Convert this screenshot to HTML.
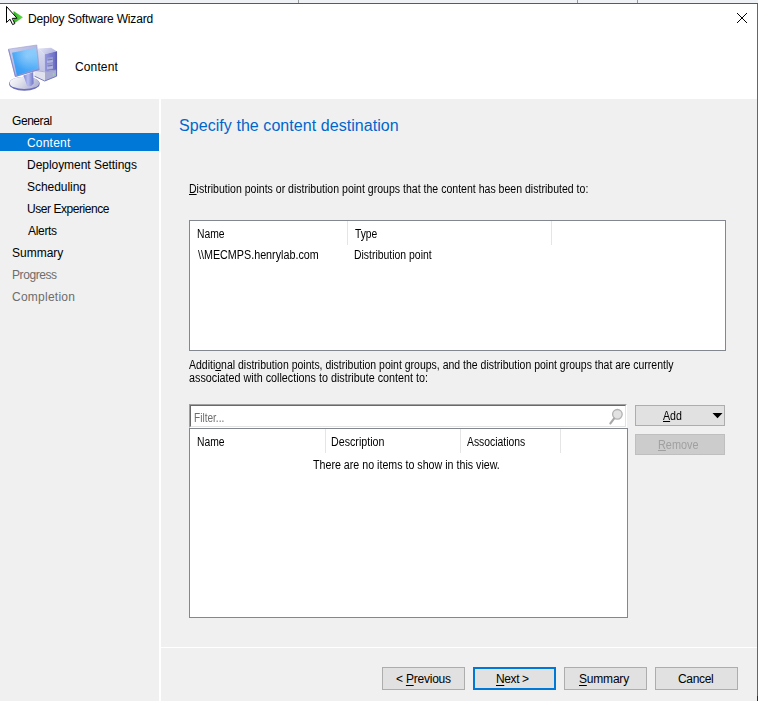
<!DOCTYPE html>
<html><head><meta charset="utf-8"><title>Deploy Software Wizard</title>
<style>
html,body{margin:0;padding:0;}
body{width:758px;height:701px;position:relative;overflow:hidden;background:#fff;font-family:"Liberation Sans",sans-serif;color:#000;}
.a{position:absolute;}
.t{position:absolute;white-space:nowrap;line-height:1;}
.box{position:absolute;background:#fff;border:1px solid #828790;box-sizing:border-box;}
.btn{position:absolute;box-sizing:border-box;border:1px solid #adadad;background:#e1e1e1;}
u{text-decoration:underline;text-underline-offset:1.5px;text-decoration-thickness:1px;}
.m u{text-underline-offset:0.5px;}
</style></head><body>
<div class="a" style="left:0;top:0;width:758px;height:3px;background:#eef1f5;"></div>
<div class="a" style="left:298px;top:0;width:1px;height:3px;background:#9a9a9a;"></div>
<div class="a" style="left:577px;top:0;width:1px;height:3px;background:#9a9a9a;"></div>
<div class="a" style="left:637px;top:0;width:1px;height:3px;background:#9a9a9a;"></div>
<div class="a" style="left:0;top:3px;width:758px;height:1px;background:#5a5a5a;"></div>
<div class="a" style="left:0;top:99px;width:757px;height:602px;background:#f0f0f0;"></div>
<div class="a" style="left:757px;top:4px;width:1px;height:697px;background:#666;"></div>
<div class="a" style="left:757px;top:696px;width:1px;height:5px;background:#0b3558;"></div>
<div class="a" style="left:159px;top:99px;width:2px;height:602px;background:#fff;"></div>
<div class="a" style="left:161px;top:647px;width:596px;height:1px;background:#fff;"></div>
<div class="a" style="left:0;top:133px;width:159px;height:18px;background:#0078d7;"></div>
<svg class="a" style="left:0;top:4px" width="30" height="26" viewBox="0 0 30 26">
<defs><linearGradient id="gg" x1="0" y1="0" x2="1" y2="0"><stop offset="0" stop-color="#2fae22"/><stop offset="1" stop-color="#66dc50"/></linearGradient></defs>
<path d="M13.5 7 L23 13.2 L14 19.5 Z" fill="url(#gg)"/>
<path d="M6.5 2.5 L6.5 18.5 L10 15.2 L12.6 20.6 L14.8 19.6 L12.3 14.4 L17 14.2 Z" fill="#fff" stroke="#000" stroke-width="1" stroke-linejoin="miter"/>
</svg>
<div class="t" style="left:28px;top:13px;font-size:12px;letter-spacing:-0.17px;">Deploy Software Wizard</div>
<svg class="a" style="left:735px;top:11px" width="14" height="14" viewBox="0 0 14 14"><path d="M2 2 L12 12 M12 2 L2 12" stroke="#000" stroke-width="1" fill="none"/></svg>
<svg class="a" style="left:0;top:36px" width="70" height="63" viewBox="0 36 70 63">
<defs>
<linearGradient id="scr" x1="0" y1="1" x2="1" y2="0"><stop offset="0" stop-color="#2f95f3"/><stop offset="0.55" stop-color="#55b0f8"/><stop offset="1" stop-color="#8fd2fc"/></linearGradient>
<linearGradient id="frm" x1="0" y1="0" x2="1" y2="1"><stop offset="0" stop-color="#cfd1ea"/><stop offset="0.5" stop-color="#b4b6e0"/><stop offset="1" stop-color="#8385cc"/></linearGradient>
<linearGradient id="twf" x1="0" y1="0" x2="0" y2="1"><stop offset="0" stop-color="#dcdef2"/><stop offset="1" stop-color="#c0c3e2"/></linearGradient>
<linearGradient id="twr" x1="0" y1="0" x2="1" y2="0"><stop offset="0" stop-color="#9698dc"/><stop offset="0.85" stop-color="#6c6ec6"/><stop offset="1" stop-color="#5052b0"/></linearGradient>
<linearGradient id="bas" x1="0" y1="0" x2="1" y2="0.4"><stop offset="0" stop-color="#ffffff"/><stop offset="0.45" stop-color="#e2e3ee"/><stop offset="1" stop-color="#b4b6d4"/></linearGradient>
<linearGradient id="nck" x1="0" y1="0" x2="1" y2="0"><stop offset="0" stop-color="#7d84d8"/><stop offset="0.45" stop-color="#b9bff0"/><stop offset="1" stop-color="#6f76c8"/></linearGradient>
<linearGradient id="twt" x1="0" y1="0" x2="1" y2="0.3"><stop offset="0" stop-color="#e6e7f6"/><stop offset="1" stop-color="#b6b8e2"/></linearGradient>
<radialGradient id="gl" cx="0.55" cy="0.3" r="0.5"><stop offset="0" stop-color="#fff" stop-opacity="0.28"/><stop offset="1" stop-color="#fff" stop-opacity="0"/></radialGradient>
<filter id="sb" x="-5%" y="-5%" width="110%" height="110%"><feGaussianBlur stdDeviation="0.35"/></filter>
</defs>
<g filter="url(#sb)">
<!-- tower -->
<path d="M38 48.4 L51.1 47.8 L56.7 51.2 L44.7 54.2 Z" fill="url(#twt)"/>
<path d="M38 48.4 L44.7 54.2 L44.7 71.6 L34.5 70.2 L34.5 60 Z" fill="url(#twf)"/>
<path d="M44.7 54.2 L56.7 51.2 L56.7 69.8 L44.7 71.6 Z" fill="url(#twr)"/>
<path d="M44.7 71.6 L56.7 69.8 L56.7 76.3 L44.7 81.2 Z" fill="#a9acd2"/>
<path d="M34.5 70.2 L44.7 71.6 L44.7 81.2 L34.5 76.4 Z" fill="#e0e2ee"/>
<path d="M34.5 70.4 L44.7 71.8 L56.7 70" stroke="#8a8cc6" stroke-width="0.6" fill="none"/>
<path d="M34.5 76.2 L44.7 81 L56.7 76.2" stroke="#6466b4" stroke-width="0.8" fill="none"/>
<path d="M56.6 51.4 L56.6 76" stroke="#4c4ea8" stroke-width="0.8"/>
<path d="M47 57.8 L52.9 57 L52.9 62.3 L47 63 Z" fill="#9a9ed2"/>
<path d="M47 63.7 L52.9 63 L52.9 68.5 L47 69.2 Z" fill="#9a9ed2"/>
<path d="M47 60.6 L52.9 59.9 L52.9 62.3 L47 63 Z" fill="#b2b6de"/>
<path d="M47 66.6 L52.9 65.9 L52.9 68.5 L47 69.2 Z" fill="#b2b6de"/>
<path d="M47.6 60 L52.4 59.4" stroke="#686ab6" stroke-width="0.8"/>
<path d="M47.6 66 L52.4 65.4" stroke="#686ab6" stroke-width="0.8"/>
<rect x="52.9" y="72.9" width="1.5" height="2.6" rx="0.5" fill="#84e860"/>
<!-- base -->
<ellipse cx="24.4" cy="83.7" rx="15.3" ry="7" fill="#6c6eba"/>
<ellipse cx="24.4" cy="82.9" rx="14.7" ry="6.2" fill="url(#bas)"/>
<!-- neck -->
<path d="M23.4 75.6 L33.2 72 L33.6 83.6 Q31 87.4 27.4 86.4 Z" fill="url(#nck)"/>
<!-- monitor -->
<path d="M8.4 49.2 L36.8 45 L39.3 69.6 L15.3 76.6 Z" fill="url(#frm)" stroke="#9a9cd2" stroke-width="0.6"/>
<path d="M8.6 49.4 L15.4 76.4 L39.2 69.5" stroke="#8284c6" stroke-width="0.9" fill="none"/>
<path d="M12 52.8 L35.9 48.1 L38.7 68.3 L16.9 75.4 Z" fill="url(#scr)"/>
<path d="M12 52.8 L35.9 48.1 L38.7 68.3 L16.9 75.4 Z" fill="url(#gl)"/>
</g>
</svg>

<div class="t" style="left:75px;top:61px;font-size:12px;letter-spacing:0.13px;">Content</div>
<div class="t" style="left:12px;top:115px;font-size:12px;letter-spacing:-0.44px;">General</div>
<div class="t" style="left:27px;top:137px;font-size:12px;letter-spacing:0.2px;color:#fff;">Content</div>
<div class="t" style="left:27px;top:159px;font-size:12px;letter-spacing:-0.04px;">Deployment Settings</div>
<div class="t" style="left:27px;top:181px;font-size:12px;letter-spacing:-0.05px;">Scheduling</div>
<div class="t" style="left:27px;top:203px;font-size:12px;letter-spacing:-0.45px;">User Experience</div>
<div class="t" style="left:28px;top:225px;font-size:12px;letter-spacing:-0.32px;">Alerts</div>
<div class="t" style="left:12px;top:247px;font-size:12px;">Summary</div>
<div class="t" style="left:12px;top:269px;font-size:12px;letter-spacing:-0.43px;color:#6d6d6d;">Progress</div>
<div class="t" style="left:12px;top:291px;font-size:12px;letter-spacing:0.25px;color:#6d6d6d;">Completion</div>
<div class="t" style="left:179px;top:118px;font-size:16px;letter-spacing:0.06px;color:#0066cc;">Specify the content destination</div>
<div class="t m" style="left:189px;top:183px;font-size:12px;transform:scaleX(0.879);transform-origin:0 0;"><u>D</u>istribution points or distribution point groups that the content has been distributed to:</div>
<div class="box" style="left:189px;top:220px;width:537px;height:131px;"></div>
<div class="a" style="left:347px;top:221px;width:1px;height:24px;background:#e5e5e5;"></div>
<div class="a" style="left:551px;top:221px;width:1px;height:24px;background:#e5e5e5;"></div>
<div class="t m" style="left:197px;top:228px;font-size:12px;transform:scaleX(0.861);transform-origin:0 0;">Name</div>
<div class="t m" style="left:355px;top:228px;font-size:12px;transform:scaleX(0.858);transform-origin:0 0;">Type</div>
<div class="t m" style="left:198px;top:249px;font-size:12px;transform:scaleX(0.896);transform-origin:0 0;">\\MECMPS.henrylab.com</div>
<div class="t m" style="left:354px;top:249px;font-size:12px;transform:scaleX(0.869);transform-origin:0 0;">Distribution point</div>
<div class="t m" style="left:189px;top:359px;font-size:12px;transform:scaleX(0.874);transform-origin:0 0;">Additi<u>o</u>nal distribution points, distribution point groups, and the distribution point groups that are currently</div>
<div class="t m" style="left:189px;top:372px;font-size:12px;transform:scaleX(0.898);transform-origin:0 0;">associated with collections to distribute content to:</div>
<div class="a" style="left:189px;top:404px;width:438px;height:24px;background:#fff;border-top:1px solid #a0a0a0;border-left:1px solid #a0a0a0;border-right:1px solid #fff;border-bottom:1px solid #fff;box-sizing:border-box;"></div>
<div class="a" style="left:190px;top:405px;width:436px;height:22px;background:#fff;border-top:1px solid #696969;border-left:1px solid #696969;border-right:1px solid #e3e3e3;border-bottom:1px solid #e3e3e3;box-sizing:border-box;"></div>
<div class="t m" style="left:194px;top:412px;font-size:12px;color:#6d6d6d;transform:scaleX(0.841);transform-origin:0 0;">Filter...</div>
<svg class="a" style="left:606px;top:407px" width="20" height="20" viewBox="0 0 20 20"><circle cx="11.4" cy="7.3" r="4.8" fill="#e2e2e2" stroke="#b2b2b2" stroke-width="1.3"/><path d="M8 11.6 L4.4 16.4" stroke="#a8a8a8" stroke-width="2.2" stroke-linecap="round"/></svg>
<div class="box" style="left:189px;top:428px;width:439px;height:190px;"></div>
<div class="a" style="left:325px;top:429px;width:1px;height:24px;background:#e5e5e5;"></div>
<div class="a" style="left:460px;top:429px;width:1px;height:24px;background:#e5e5e5;"></div>
<div class="a" style="left:560px;top:429px;width:1px;height:24px;background:#e5e5e5;"></div>
<div class="t m" style="left:197px;top:436px;font-size:12px;transform:scaleX(0.861);transform-origin:0 0;">Name</div>
<div class="t m" style="left:331px;top:436px;font-size:12px;transform:scaleX(0.89);transform-origin:0 0;">Description</div>
<div class="t m" style="left:467px;top:436px;font-size:12px;transform:scaleX(0.864);transform-origin:0 0;">Associations</div>
<div class="t m" style="left:313px;top:459px;font-size:12px;transform:scaleX(0.889);transform-origin:0 0;">There are no items to show in this view.</div>
<div class="btn" style="left:635px;top:405px;width:90px;height:21px;"></div>
<div class="t m" style="left:663px;top:410px;font-size:12.5px;transform:scaleX(0.85);transform-origin:0 0;"><u>A</u>dd</div>
<svg class="a" style="left:712px;top:412px" width="12" height="8" viewBox="0 0 12 8"><path d="M0.5 1 L10.5 1 L5.5 6.2 Z" fill="#000"/></svg>
<div class="btn" style="left:635px;top:434px;width:90px;height:21px;background:#cccccc;border-color:#bfbfbf;"></div>
<div class="t m" style="left:658px;top:439px;font-size:12.5px;color:#a0a0a0;transform:scaleX(0.871);transform-origin:0 0;"><u>R</u>emove</div>
<div class="btn" style="left:382px;top:667px;width:83px;height:23px;"></div>
<div class="t" style="left:396px;top:673px;font-size:12px;letter-spacing:-0.22px;">&lt; <u>P</u>revious</div>
<div class="btn" style="left:473px;top:667px;width:83px;height:23px;border:2px solid #0078d7;"></div>
<div class="t" style="left:496px;top:673px;font-size:12px;letter-spacing:-0.4px;"><u>N</u>ext &gt;</div>
<div class="btn" style="left:564px;top:667px;width:83px;height:23px;"></div>
<div class="t" style="left:579px;top:673px;font-size:12px;letter-spacing:-0.2px;"><u>S</u>ummary</div>
<div class="btn" style="left:655px;top:667px;width:83px;height:23px;"></div>
<div class="t" style="left:678px;top:673px;font-size:12px;letter-spacing:-0.32px;">Cancel</div>
</body></html>
